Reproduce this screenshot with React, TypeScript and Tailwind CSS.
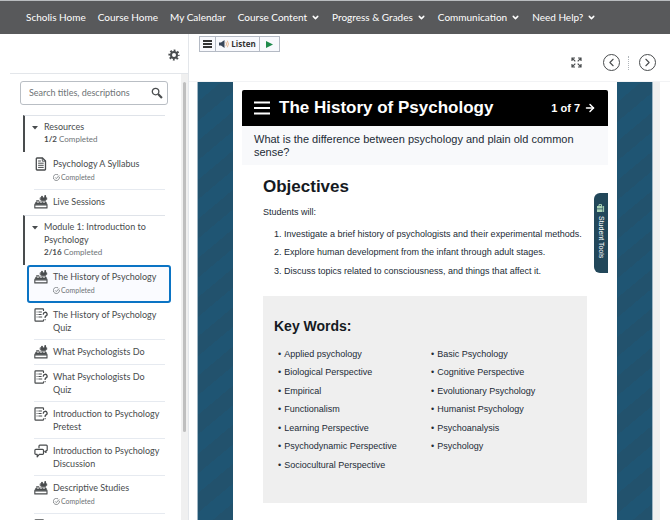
import React from 'react';
import { ChevronDown, ChevronLeft, ChevronRight, ArrowRight } from 'lucide-react';

type IconKind = 'doc' | 'scorm' | 'quiz' | 'discussion';

interface Topic {
    title: string;
    icon: IconKind;
    completed?: boolean;
    selected?: boolean;
}

interface Module {
    title: string;
    done: string;
    topics: Topic[];
}

const navItems = [
    { label: 'Scholis Home' },
    { label: 'Course Home' },
    { label: 'My Calendar' },
    { label: 'Course Content', menu: true },
    { label: 'Progress & Grades', menu: true },
    { label: 'Communication', menu: true },
    { label: 'Need Help?', menu: true },
];

const modules: Module[] = [
    {
        title: 'Resources',
        done: '1/2',
        topics: [
            { title: 'Psychology A Syllabus', icon: 'doc', completed: true },
            { title: 'Live Sessions', icon: 'scorm' },
        ],
    },
    {
        title: 'Module 1: Introduction to Psychology',
        done: '2/16',
        topics: [
            { title: 'The History of Psychology', icon: 'scorm', completed: true, selected: true },
            { title: 'The History of Psychology Quiz', icon: 'quiz' },
            { title: 'What Psychologists Do', icon: 'scorm' },
            { title: 'What Psychologists Do Quiz', icon: 'quiz' },
            { title: 'Introduction to Psychology Pretest', icon: 'quiz' },
            { title: 'Introduction to Psychology Discussion', icon: 'discussion' },
            { title: 'Descriptive Studies', icon: 'scorm', completed: true },
            { title: '', icon: 'quiz' },
        ],
    },
];

const objectives = [
    'Investigate a brief history of psychologists and their experimental methods.',
    'Explore human development from the infant through adult stages.',
    'Discuss topics related to consciousness, and things that affect it.',
];

const keyWords = [
    [
        'Applied psychology',
        'Biological Perspective',
        'Empirical',
        'Functionalism',
        'Learning Perspective',
        'Psychodynamic Perspective',
        'Sociocultural Perspective',
    ],
    [
        'Basic Psychology',
        'Cognitive Perspective',
        'Evolutionary Psychology',
        'Humanist Psychology',
        'Psychoanalysis',
        'Psychology',
    ],
];

const TopicIcon: React.FC<{ kind: IconKind }> = ({ kind }) => (
    <svg viewBox="0 0 14 14" className="size-[14px] shrink-0" fill="none" stroke="#494c4e" strokeLinecap="round" strokeLinejoin="round" aria-hidden="true">
        {kind === 'doc' && (
            <>
                <path d="M3 1h5.5L11.500 4v8.300a.7.7 0 0 1-.7.7H3a.7.7 0 0 1-.7-.7V1.700A.7.7 0 0 1 3 1Z" strokeWidth="1.3" />
                <path d="M8.300 1.200v3h3" strokeWidth=".9" />
                <path d="M4.500 4h2M4.500 6.200h4.800M4.500 8.300h4.800M4.500 10.400h4.800" strokeWidth="1" />
            </>
        )}
        {kind === 'scorm' && (
            <>
                <path d="M.8 9.900h12.200v3H.8Z" strokeWidth="1.100" />
                <path d="M.8 9.200 2 6.800h10l1 2.400Z" fill="#494c4e" strokeWidth=".5" />
                <path d="M3.200 7.200h1.500M6.200 7.200h1.500M9.200 7.200h1.500" stroke="#fff" strokeWidth=".8" />
                <path d="M2.600 5.700h2.200" strokeWidth="1.100" />
                <path d="M6.400 2.700h6.400v1.900H6.400ZM7.400 4.500h4.200v1.300H7.400Z" fill="#494c4e" strokeWidth=".6" />
                <path d="M8 1.600v.8M11.200 1v1.400" strokeWidth="1.800" />
            </>
        )}
        {kind === 'quiz' && (
            <>
                <path d="M9.500 2.500v-1A.6.6 0 0 0 8.900.9H1.600a.6.6 0 0 0-.6.6v11a.6.6 0 0 0 .6.6h7.300a.6.6 0 0 0 .6-.6v-.6" strokeWidth="1.200" />
                <path d="M3 4h.1M3 6.500h.1M3 9h.1M4.800 4h2.700M4.800 6.500h2.400M4.800 9h3" strokeWidth="1" />
                <path d="M9.300 6.200a1.900 1.900 0 1 1 2.700 1.700c-.7.4-.9.7-.9 1.500M11.100 11.600v.1" strokeWidth="1.300" />
            </>
        )}
        {kind === 'discussion' && (
            <>
                <path d="M5 3.800V2a.9.9 0 0 1 .9-.9h6.400a.9.9 0 0 1 .9.9v3.800a.9.9 0 0 1-.9.9h-.3v1.800L10.800 7.500" strokeWidth="1.200" />
                <path d="M1.800 5.300h6.800a.9.9 0 0 1 .9.9v3.300a.9.9 0 0 1-.9.9H5.300l-2.100 2.500v-2.500H1.800a.9.9 0 0 1-.9-.9V6.200a.9.9 0 0 1 .9-.9Z" strokeWidth="1.200" />
            </>
        )}
    </svg>
);

const CheckMark = () => (
    <svg viewBox="0 0 8 8" className="size-[7px] shrink-0" fill="none" stroke="#6e7376" aria-hidden="true">
        <path d="M7.300 3.300A3.500 3.500 0 1 1 5.800 1M2.500 3.900 3.800 5.200 7 1.700" strokeWidth=".9" />
    </svg>
);

const TopicRow: React.FC<{ topic: Topic; last: boolean }> = ({ topic, last }) => {
    const frame = topic.selected
        ? 'rounded-[3px] border-2 border-[#0b74c4] bg-[#fafbff] pt-[3px] pb-1 pl-[5px]'
        : 'border-b py-[5px]';
    const line = topic.selected ? '' : last ? 'border-transparent' : 'border-[#e6eaf0]';
    return (
        <li className={topic.selected ? 'ml-[27px] mr-[10px]' : 'ml-[34px] mr-4'}>
            <a href="#topic" aria-label={topic.title || 'Quiz'} className={`flex gap-[5px] ${frame} ${line}`}>
                <TopicIcon kind={topic.icon} />
                <span>
                    <span className="block text-[9px] leading-[13px]">{topic.title}</span>
                    {topic.completed && (
                        <span className="flex items-center gap-px text-[7px] leading-[14px] text-[#6e7376]">
                            <CheckMark /> Completed
                        </span>
                    )}
                </span>
            </a>
        </li>
    );
};

const Sidebar = () => (
    <aside className="flex w-[189px] shrink-0 flex-col border-r border-[#e3e6ea]">
        <div className="ml-2.5 flex h-10 shrink-0 items-center justify-end border-b border-[#e3e6ea] pt-0.5 pr-2">
            <button type="button" aria-label="Settings">
                <svg viewBox="0 0 12 12" className="size-3" fill="none" stroke="#494c4e" aria-hidden="true">
                    <circle cx="6" cy="6" r="3" strokeWidth="2" />
                    <circle cx="6" cy="6" r="4.700" strokeWidth="1.800" strokeDasharray="1.850 1.840" strokeDashoffset=".9" />
                </svg>
            </button>
        </div>
        <div className="flex min-h-0 flex-1">
            <div className="min-w-0 flex-1 overflow-hidden">
                <form className="mt-[7px] mr-[13px] ml-5 flex h-6 items-center rounded-[3px] border border-[#b9bec4] pr-1 pl-2">
                    <input
                        type="text"
                        aria-label="Search titles, descriptions"
                        placeholder="Search titles, descriptions"
                        className="min-w-0 flex-1 text-[9px] outline-none placeholder:text-[#6e7376]"
                    />
                    <button type="button" aria-label="Search">
                        <svg viewBox="0 0 11 11" className="size-3" fill="none" stroke="#494c4e" aria-hidden="true">
                            <circle cx="4.200" cy="4.200" r="3" strokeWidth="1.200" />
                            <path d="m6.500 6.500 3.500 3.500" strokeWidth="2" />
                        </svg>
                    </button>
                </form>
                <div className="pt-2.5">
                    {modules.map((mod) => (
                        <section key={mod.title}>
                            <button
                                type="button"
                                className="ml-[23px] flex w-[142px] items-start border-t border-l-2 border-t-[#dfe3e9] border-l-[#494c4e] pt-1 pb-1.5 pl-[7px] text-left"
                            >
                                <svg viewBox="0 0 6 4" className="mt-1.5 mr-[6px] h-1 w-1.5 shrink-0" aria-hidden="true">
                                    <path d="M0 0h6L3 3.600Z" fill="#494c4e" />
                                </svg>
                                <span className="text-[9px] leading-[13px]">
                                    {mod.title}
                                    <span className="block text-[8px] text-[#6e7376]">
                                        <b className="text-[#494c4e]">{mod.done}</b> Completed
                                    </span>
                                </span>
                            </button>
                            <ul>
                                {mod.topics.map((topic, i) => (
                                    <TopicRow key={topic.title} topic={topic} last={i === mod.topics.length - 1} />
                                ))}
                            </ul>
                        </section>
                    ))}
                </div>
            </div>
            <div className="w-[7px] shrink-0 bg-[#f0f0f0] px-0.5 pt-2">
                <div className="h-[350px] rounded-full bg-[#bfbfbf]" />
            </div>
        </div>
    </aside>
);

const Toolbar = () => (
    <div className="flex h-12 shrink-0 items-start justify-between border-b border-[#f2f3f5] pr-3.5 pl-[10px]">
        <div className="mt-0.5 flex h-4 items-center divide-x divide-[#b4bac4] border border-[#b4bac4] bg-[#f8f9fd]">
            <button type="button" aria-label="Reader menu" className="flex h-full w-4 items-center justify-center">
                <svg viewBox="0 0 9 8" className="h-2 w-[9px]" stroke="#333" strokeWidth="1.800" aria-hidden="true">
                    <path d="M0 1h9M0 4h9M0 7h9" />
                </svg>
            </button>
            <button type="button" className="flex h-full w-11 items-center justify-center gap-0.5 font-['Open_Sans',sans-serif] text-[8px] font-bold text-[#333]">
                <svg viewBox="0 0 10 8" className="h-2 w-2.5" aria-hidden="true">
                    <path d="M0 2.500h2L5.500 0v8L2 5.500H0Z" fill="#39475a" />
                    <path d="M6.800 1.800q1.500 2.200 0 4.400M8.300.7q2.300 3.300 0 6.600" fill="none" stroke="#e3a877" strokeWidth=".8" />
                </svg>
                Listen
            </button>
            <button type="button" aria-label="Play" className="flex h-full w-[19px] items-center justify-center">
                <svg viewBox="0 0 6 6" className="size-[7px]" aria-hidden="true">
                    <path d="M0 0 6 3 0 6Z" fill="#1f8a4c" />
                </svg>
            </button>
        </div>
        <div className="mt-5 flex items-center text-[#494c4e]">
            <button type="button" aria-label="Full screen">
                <svg viewBox="0 0 11 11" className="size-[11px]" fill="none" stroke="currentColor" aria-hidden="true">
                    <path d="M1 4V1h3M7 1h3v3M10 7v3H7M4 10H1V7M1.300 1.300l3 3M9.700 1.300l-3 3M9.700 9.700l-3-3M1.300 9.700l3-3" strokeWidth="1.200" />
                </svg>
            </button>
            <button type="button" aria-label="Previous" className="ml-[21px] flex size-[17px] items-center justify-center rounded-full border border-[#494c4e]">
                <ChevronLeft size={13} />
            </button>
            <span className="mx-2 h-3.5 border-l border-dotted border-[#b0b5ba]" />
            <button type="button" aria-label="Next" className="ml-0.5 flex size-[17px] items-center justify-center rounded-full border border-[#494c4e]">
                <ChevronRight size={13} />
            </button>
        </div>
    </div>
);

const Lesson = () => (
    <article className="relative flex-1 bg-white px-[9px] pt-2 font-['Liberation_Sans',Arial,sans-serif] text-[#222b36]">
        <header className="flex h-9 items-center rounded-t-[2px] bg-black px-3 text-white">
            <button type="button" aria-label="Lesson menu">
                <svg viewBox="0 0 16 14" className="h-3.5 w-4" stroke="#fff" strokeWidth="2" aria-hidden="true">
                    <path d="M0 1.500h16M0 7h16M0 12.500h16" />
                </svg>
            </button>
            <h1 className="ml-[9px] flex-1 text-[17px] font-bold">The History of Psychology</h1>
            <a href="#next" className="flex items-center gap-1 text-[11px] font-bold">
                1 of 7 <ArrowRight size={12} strokeWidth={3} />
            </a>
        </header>
        <p className="bg-[#f8f9fb] px-3 pt-[7px] pb-1.5 text-[11px] leading-[13px]">
            What is the difference between psychology and plain old common sense?
        </p>
        <div className="px-[21px] text-[9px]">
            <h2 className="mt-3 text-[17px] leading-5 font-bold text-[#151a22]">Objectives</h2>
            <p className="mt-2 leading-[14px]">Students will:</p>
            <ol className="mt-1.5 grid h-14 list-inside list-decimal grid-rows-3 items-center pl-[11px]">
                {objectives.map((text) => (
                    <li key={text}>{text}</li>
                ))}
            </ol>
            <section className="mt-[15px] bg-[#efefef] px-[11px] pt-[21px] pb-7">
                <h3 className="text-[14px] leading-[18px] font-bold text-[#151a22]">Key Words:</h3>
                <div className="mt-[10px] grid grid-cols-2 gap-x-1">
                    {keyWords.map((words) => (
                        <ul key={words[0]} className="grid h-[130px] grid-rows-7 items-center pl-1">
                            {words.map((word) => (
                                <li key={word} className="flex gap-[3px]">
                                    <span aria-hidden="true">•</span>
                                    {word}
                                </li>
                            ))}
                        </ul>
                    ))}
                </div>
            </section>
        </div>
        <button
            type="button"
            className="absolute top-[111px] right-[9px] flex h-20 w-3.5 items-center gap-1 rounded-l-[6px] bg-[#22475a] pt-[11px] text-[7px] text-white [writing-mode:vertical-rl]"
        >
            <svg viewBox="0 0 8 8" className="size-2" aria-hidden="true">
                <path d="M0 2h5.500v2.500H0ZM0 5.200h5.500V8H0Z" fill="#a9d3b5" />
                <path d="M2 2V.6h2.500V2M6.600 2v6" fill="none" stroke="#a9d3b5" strokeWidth="1" />
            </svg>
            Student Tools
        </button>
    </article>
);

export default function App() {
    return (
        <div className="flex h-screen flex-col overflow-hidden bg-white font-[Lato,sans-serif] text-[#494c4e]">
            <nav className="flex h-[34px] shrink-0 items-center gap-3 border-t border-[#b9bcbf] bg-[#58595b] pl-[26px] text-[10px] whitespace-nowrap text-white">
                {navItems.map((item) =>
                    item.menu ? (
                        <button key={item.label} type="button" className="flex items-center gap-1">
                            {item.label}
                            <ChevronDown size={9} strokeWidth={4} />
                        </button>
                    ) : (
                        <a key={item.label} href="#home">
                            {item.label}
                        </a>
                    )
                )}
            </nav>
            <div className="flex min-h-0 flex-1">
                <Sidebar />
                <main className="flex min-w-0 flex-1 flex-col">
                    <Toolbar />
                    <div className="mr-2.5 ml-2 flex min-h-0 flex-1">
                        <div className="flex flex-1 border-x border-[#9fb6c4] bg-[repeating-linear-gradient(140deg,#1f5573_0_15px,#22526d_15px_30px)] px-[35px]">
                            <Lesson />
                        </div>
                        <div className="w-[7px] shrink-0 bg-[#f0f0f0]" />
                    </div>
                </main>
            </div>
        </div>
    );
}
